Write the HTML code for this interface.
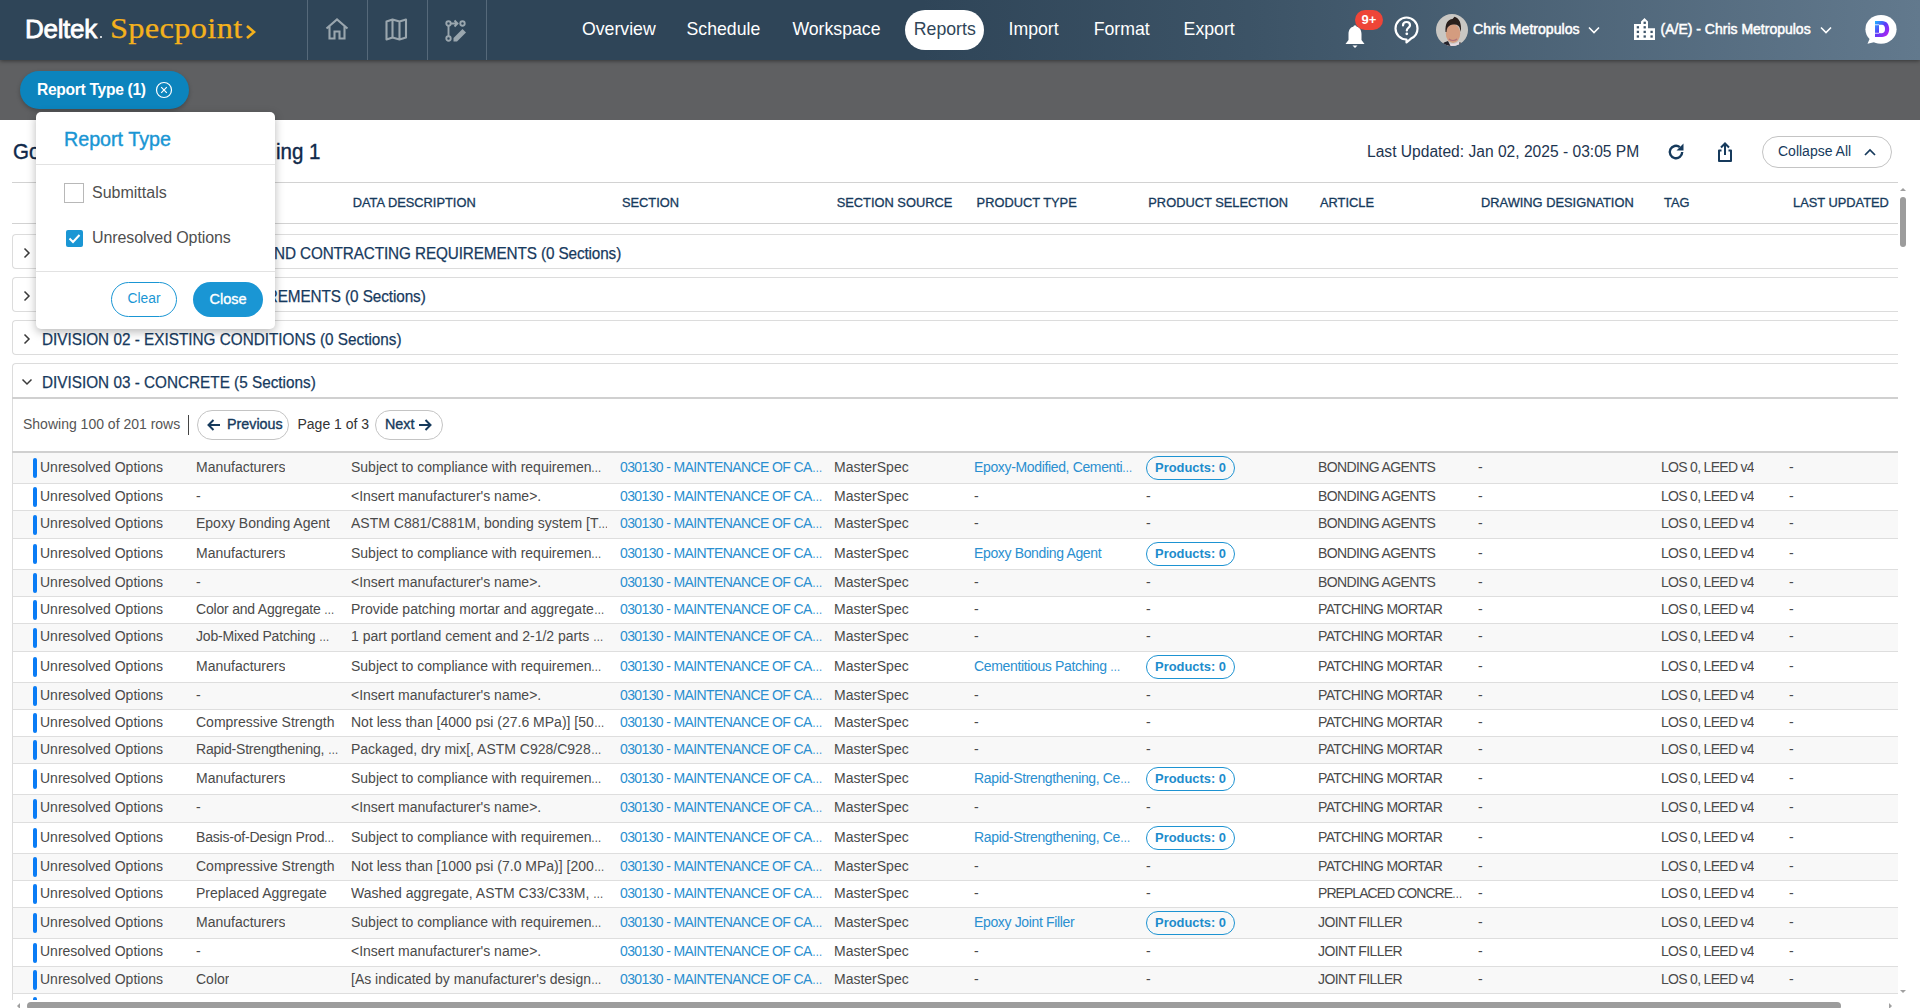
<!DOCTYPE html>
<html><head><meta charset="utf-8">
<style>
*{box-sizing:border-box;}
html,body{margin:0;padding:0;}
body{width:1920px;height:1008px;overflow:hidden;position:relative;font-family:"Liberation Sans",sans-serif;background:#fff;color:#444;}
.a{position:absolute;white-space:nowrap;}
#hdr{position:absolute;left:0;top:0;width:1920px;height:60px;background:linear-gradient(90deg,#2f4558 0%,#2f4558 48%,#3c5366 65%,#62798d 100%);z-index:6;box-shadow:0 1px 4px rgba(0,0,0,.45);}
.logo1{left:25px;top:13px;font-size:26px;color:#fff;letter-spacing:-0.3px;line-height:32px;-webkit-text-stroke:0.8px #fff;}
.logodot{left:100px;top:36px;width:2px;height:2px;background:#c9d0d6;}
.logo2{left:110px;top:11px;font-family:"Liberation Serif",serif;font-size:30px;color:#f4b11c;letter-spacing:0.3px;line-height:34px;-webkit-text-stroke:0.25px #f4b11c;transform:scaleX(1.08);transform-origin:0 0;}
.vdiv{top:0;width:1px;height:60px;background:#56697a;}
.nav{top:18px;font-size:17.7px;color:#fff;line-height:22px;}
.pillnav{left:905px;top:10px;width:79px;height:40px;border-radius:20px;background:#fff;}
#fbar{position:absolute;left:0;top:60px;width:1920px;height:60px;background:#5f6062;z-index:1;}
.chip{left:20px;top:71px;width:169px;height:38px;border-radius:19px;background:#0c84bd;z-index:7;box-shadow:0 2px 4px rgba(0,0,0,.25);}
.chiptxt{left:37px;top:80px;font-size:15.6px;font-weight:bold;color:#fff;line-height:20px;letter-spacing:-0.3px;z-index:8;}
.title{left:13px;top:139px;font-size:22.3px;color:#10294a;line-height:26px;-webkit-text-stroke:0.4px #10294a;transform:scaleX(0.92);transform-origin:0 0;}
.lu{left:1367px;top:142px;font-size:15.6px;color:#1d3550;line-height:20px;}
.btn{border:1px solid #c4c4c4;border-radius:16px;background:#fff;}
.hline{left:12px;width:1886px;height:1px;background:#d2d2d2;}
.th{top:195px;font-size:12.85px;color:#163a5c;line-height:16px;letter-spacing:0px;-webkit-text-stroke:0.3px #163a5c;}
.div{left:12px;width:1886px;height:35px;border:1px solid #dcdcdc;border-right:none;border-radius:4px 0 0 4px;background:#fff;}
.dtxt{font-size:16.6px;color:#173a5e;line-height:20px;-webkit-text-stroke:0.25px #173a5e;transform:scaleX(0.922);transform-origin:0 0;}
.tr{position:absolute;left:12px;width:1886px;border-bottom:1px solid #dedede;border-left:1px solid #dcdcdc;}
.td{position:absolute;top:0;white-space:nowrap;font-size:14px;color:#4a4a4a;}
.lk{color:#2a8fd0;}
.el{display:inline-block;transform:scaleX(0.75);transform-origin:0 50%;letter-spacing:0;}
.td{overflow:hidden;}
.up{letter-spacing:-0.62px;}
.pt{letter-spacing:-0.35px;}
.tr2{letter-spacing:-0.2px;}
.los{letter-spacing:-0.7px;}
.bar{position:absolute;left:20px;width:4px;height:20px;border-radius:2px;background:#0a7cf5;}
.pill{position:absolute;width:89px;height:24px;border:1.5px solid #1d93d2;border-radius:12px;color:#1d8ccc;font-weight:bold;font-size:12.9px;line-height:21px;text-align:center;}
#dd{position:absolute;left:36px;top:112px;width:239px;height:217px;background:#fff;border-radius:5px;box-shadow:0 3px 10px rgba(0,0,0,.28);z-index:10;}
</style></head><body>

<div id="hdr">
  <div class="a logo1">Deltek</div>
  <div class="a logodot"></div>
  <div class="a logo2">Specpoint</div>
  <svg class="a" style="left:245px;top:25px" width="11" height="14" viewBox="0 0 11 14"><path d="M2 1 L9 7 L2 13" fill="none" stroke="#f4b11c" stroke-width="2.6"/></svg>
  <div class="a vdiv" style="left:307px"></div>
  <div class="a vdiv" style="left:367px"></div>
  <div class="a vdiv" style="left:427px"></div>
  <div class="a vdiv" style="left:486px"></div>
  <!-- home -->
  <svg class="a" style="left:325px;top:18px" width="24" height="22" viewBox="0 0 24 22"><path d="M1.5 10.5 L12 1.5 L22.5 10.5 M4.5 8.5 V20.5 H9.5 V13.5 H14.5 V20.5 H19.5 V8.5" fill="none" stroke="#9aa6ae" stroke-width="2.1"/></svg>
  <!-- map -->
  <svg class="a" style="left:385px;top:18px" width="23" height="23" viewBox="0 0 23 23"><path d="M1.5 3.5 L7.5 1.5 L14.5 3.5 L21 1.5 V19.5 L14.5 21.5 L7.5 19.5 L1.5 21.5 Z M7.5 1.5 V19.5 M14.5 3.5 V21.5" fill="none" stroke="#9aa6ae" stroke-width="2.1" stroke-linejoin="round"/></svg>
  <!-- route edit -->
  <svg class="a" style="left:445px;top:19px" width="24" height="24" viewBox="0 0 24 24"><circle cx="3.5" cy="4.5" r="2.2" fill="none" stroke="#9aa6ae" stroke-width="1.9"/><circle cx="3.5" cy="19.5" r="2.2" fill="none" stroke="#9aa6ae" stroke-width="1.9"/><circle cx="17.5" cy="4.5" r="2.2" fill="none" stroke="#9aa6ae" stroke-width="1.9"/><path d="M3.5 6.7 V17.3 M5.7 4.5 H12.5 M9.5 1.5 L12.5 4.5 L9.5 7.5" fill="none" stroke="#9aa6ae" stroke-width="1.9"/><path d="M8.5 22.5 V19 L17.5 10 L21 13.5 L12 22.5 Z" fill="#9aa6ae"/></svg>

  <div class="a pillnav"></div>
  <div class="a nav" style="left:582px">Overview</div>
  <div class="a nav" style="left:686.5px">Schedule</div>
  <div class="a nav" style="left:792.4px">Workspace</div>
  <div class="a nav" style="left:913.8px;color:#2f4558">Reports</div>
  <div class="a nav" style="left:1008.5px">Import</div>
  <div class="a nav" style="left:1093.7px">Format</div>
  <div class="a nav" style="left:1183.6px">Export</div>

  <!-- bell -->
  <svg class="a" style="left:1344px;top:25px" width="22" height="24" viewBox="0 0 22 24"><path d="M11 1.5 C6.5 1.5 4.5 5 4.5 9 V15 L1.5 19 H20.5 L17.5 15 V9 C17.5 5 15.5 1.5 11 1.5 Z" fill="#fff"/><path d="M8.5 20.5 H13.5 L11 23 Z" fill="#fff"/><circle cx="11" cy="1.8" r="1.6" fill="#fff"/></svg>
  <div class="a" style="left:1355px;top:10px;width:28px;height:20px;border-radius:10px;background:#ee4538;color:#fff;font-weight:bold;font-size:13px;line-height:20px;text-align:center;">9+</div>
  <!-- help -->
  <svg class="a" style="left:1394px;top:16px" width="25" height="28" viewBox="0 0 25 28"><path d="M12.5 1.5 C6.4 1.5 1.5 6.4 1.5 12.5 C1.5 18.6 6.4 23.5 12.5 23.5 L12.5 26.5 L17 22.6 C20.8 20.9 23.5 17 23.5 12.5 C23.5 6.4 18.6 1.5 12.5 1.5 Z" fill="none" stroke="#fff" stroke-width="2.2" stroke-linejoin="round"/><path d="M9 9.5 C9 7.3 10.6 6 12.5 6 C14.4 6 16 7.3 16 9.2 C16 11.5 12.8 12 12.8 14.5" fill="none" stroke="#fff" stroke-width="2.2" stroke-linecap="round"/><circle cx="12.8" cy="17.8" r="1.4" fill="#fff"/></svg>
  <!-- avatar -->
  <svg class="a" style="left:1436px;top:14px" width="32" height="32" viewBox="0 0 32 32"><defs><clipPath id="ac"><circle cx="16" cy="16" r="16"/></clipPath></defs><g clip-path="url(#ac)"><rect width="32" height="32" fill="#c9c7c3"/><path d="M11 28 C14 30.5 20 30.5 23 27.5 L25 32 H11 Z" fill="#e6d8df"/><path d="M5 32 L8 28.5 L12 27 L14.5 32 Z" fill="#25222a"/><path d="M23.5 28 L26 29.5 L25 32 H23 Z" fill="#3a2f35"/><ellipse cx="17" cy="19.5" rx="7.2" ry="9.5" fill="#d49c7f"/><path d="M9.5 18 C9 9 12 5.5 16.5 5 L18.5 2.8 C23.5 4.5 25.5 9 25 18 L24 15 C23.5 11.5 21 10 17 10.5 C13.5 11 11 12.5 10.5 18 Z" fill="#2a1f1b"/><path d="M13 25 C15 27 19 27 21 25" stroke="#b0707a" stroke-width="1.2" fill="none"/></g></svg>
  <div class="a" style="left:1473px;top:20px;font-size:14.1px;-webkit-text-stroke:0.5px #fff;color:#fff;line-height:18px;">Chris Metropulos</div>
  <svg class="a" style="left:1588px;top:26px" width="12" height="8" viewBox="0 0 12 8"><path d="M1 1.5 L6 6.5 L11 1.5" fill="none" stroke="#fff" stroke-width="1.6"/></svg>
  <!-- building -->
  <svg class="a" style="left:1633px;top:18px" width="23" height="23" viewBox="0 0 23 23"><path d="M1 6 H8 V3.6 L11.5 0 L15 3.6 V10.2 H22 V22 H1 Z" fill="#fff"/><g fill="#3f566a"><rect x="10.55" y="3.65" width="2.3" height="2.3"/><rect x="3.75" y="8.15" width="2.3" height="2.3"/><rect x="10.55" y="8.15" width="2.3" height="2.3"/><rect x="3.75" y="12.75" width="2.3" height="2.3"/><rect x="10.55" y="12.75" width="2.3" height="2.3"/><rect x="17.45" y="12.75" width="2.3" height="2.3"/><rect x="3.75" y="17.35" width="2.3" height="2.3"/><rect x="10.55" y="17.35" width="2.3" height="2.3"/><rect x="17.45" y="17.35" width="2.3" height="2.3"/></g></svg>
  <div class="a" style="left:1660.5px;top:20px;font-size:14px;-webkit-text-stroke:0.5px #fff;color:#fff;line-height:18px;">(A/E) - Chris Metropulos</div>
  <svg class="a" style="left:1820px;top:26px" width="12" height="8" viewBox="0 0 12 8"><path d="M1 1.5 L6 6.5 L11 1.5" fill="none" stroke="#fff" stroke-width="1.6"/></svg>
  <!-- D bubble -->
  <svg class="a" style="left:1863px;top:13px" width="35" height="33" viewBox="0 0 35 33"><defs><linearGradient id="dg" x1="0" y1="0" x2="1" y2="1"><stop offset="0" stop-color="#1cb8ff"/><stop offset="0.45" stop-color="#5a3cf8"/><stop offset="1" stop-color="#c61cf0"/></linearGradient></defs><ellipse cx="18" cy="16.3" rx="15.6" ry="14.4" fill="#fff"/><path d="M7 25 L4.5 30.8 L12 29" fill="#fff"/><path fill-rule="evenodd" d="M12 8 H19 C23.8 8 26.2 11.6 26.2 16 C26.2 20.4 23.8 24 19 24 H12 Z M16 11.8 H19 C21 11.8 22 13.7 22 16 C22 18.3 21 20.2 19 20.2 H16 Z" fill="url(#dg)"/><rect x="12" y="11.4" width="4" height="0.8" fill="#fff"/><rect x="12" y="19.8" width="4" height="0.8" fill="#fff"/></svg>
</div>

<div id="fbar"></div>
<div class="a chip"></div>
<div class="a chiptxt">Report Type (1)</div>
<svg class="a" style="left:155px;top:81px;z-index:8" width="18" height="18" viewBox="0 0 18 18"><circle cx="9" cy="9" r="7.5" fill="none" stroke="#fff" stroke-width="1.2"/><path d="M6.2 6.2 L11.8 11.8 M11.8 6.2 L6.2 11.8" stroke="#fff" stroke-width="1.2"/></svg>

<!-- title bar -->
<div class="a title">Go</div><div class="a title" style="left:276px">ing 1</div>
<div class="a lu">Last Updated: Jan 02, 2025 - 03:05 PM</div>
<svg class="a" style="left:1666px;top:142px" width="20" height="20" viewBox="0 0 20 20"><path d="M16.2 10 A6.2 6.2 0 1 1 13.8 5.1" fill="none" stroke="#163a5c" stroke-width="2.4"/><path d="M17.5 1.5 V8.5 H10.5 Z" fill="#163a5c"/></svg>
<svg class="a" style="left:1715px;top:141px" width="20" height="22" viewBox="0 0 20 22"><path d="M10 14 V3 M6 6.5 L10 2.5 L14 6.5" fill="none" stroke="#163a5c" stroke-width="2"/><path d="M6.5 9.5 H4 V20 H16 V9.5 H13.5" fill="none" stroke="#163a5c" stroke-width="2" stroke-linejoin="round"/></svg>
<div class="a btn" style="left:1762px;top:136px;width:130px;height:32px;"></div>
<div class="a" style="left:1778px;top:142px;font-size:14px;color:#163a5c;line-height:18px;">Collapse All</div>
<svg class="a" style="left:1863px;top:147px" width="14" height="10" viewBox="0 0 14 10"><path d="M2 8 L7 3 L12 8" fill="none" stroke="#163a5c" stroke-width="1.7"/></svg>

<div class="a hline" style="top:182px"></div>
<div class="a th" style="left:40px">REPORT TYPE</div>
<div class="a th" style="left:197px">TITLE</div>
<div class="a th" style="left:352.7px">DATA DESCRIPTION</div>
<div class="a th" style="left:621.9px">SECTION</div>
<div class="a th" style="left:836.7px">SECTION SOURCE</div>
<div class="a th" style="left:976.6px">PRODUCT TYPE</div>
<div class="a th" style="left:1148.3px">PRODUCT SELECTION</div>
<div class="a th" style="left:1320px">ARTICLE</div>
<div class="a th" style="left:1481px">DRAWING DESIGNATION</div>
<div class="a th" style="left:1664px">TAG</div>
<div class="a th" style="left:1793px">LAST UPDATED</div>
<div class="a hline" style="top:223px"></div>

<!-- divisions -->
<div class="a div" style="top:234px"></div>
<svg class="a" style="left:22px;top:247px" width="10" height="12" viewBox="0 0 10 12"><path d="M2.5 1.5 L7 6 L2.5 10.5" fill="none" stroke="#3a3a3a" stroke-width="1.5"/></svg>
<div class="a dtxt" style="left:42px;top:244px;letter-spacing:-0.13px">DIVISION 00 - PROCUREMENT AND CONTRACTING REQUIREMENTS (0 Sections)</div>
<div class="a div" style="top:277px"></div>
<svg class="a" style="left:22px;top:290px" width="10" height="12" viewBox="0 0 10 12"><path d="M2.5 1.5 L7 6 L2.5 10.5" fill="none" stroke="#3a3a3a" stroke-width="1.5"/></svg>
<div class="a dtxt" style="left:42px;top:287px;letter-spacing:-0.1px">DIVISION 01 - GENERAL REQUIREMENTS (0 Sections)</div>
<div class="a div" style="top:320px"></div>
<svg class="a" style="left:22px;top:333px" width="10" height="12" viewBox="0 0 10 12"><path d="M2.5 1.5 L7 6 L2.5 10.5" fill="none" stroke="#3a3a3a" stroke-width="1.5"/></svg>
<div class="a dtxt" style="left:42px;top:330px">DIVISION 02 - EXISTING CONDITIONS (0 Sections)</div>
<div class="a div" style="top:363px;height:700px;"></div>
<svg class="a" style="left:21px;top:377px" width="12" height="10" viewBox="0 0 12 10"><path d="M1.5 2.5 L6 7 L10.5 2.5" fill="none" stroke="#3a3a3a" stroke-width="1.5"/></svg>
<div class="a dtxt" style="left:42px;top:373px">DIVISION 03 - CONCRETE (5 Sections)</div>
<div class="a" style="left:12px;top:397px;width:1886px;height:2px;background:#d0d0d0;"></div>

<!-- pagination -->
<div class="a" style="left:23px;top:415px;font-size:14px;color:#555;line-height:18px;">Showing 100 of 201 rows</div>
<div class="a" style="left:188px;top:415px;width:1px;height:20px;background:#444;"></div>
<div class="a btn" style="left:197px;top:410px;width:92px;height:30px;border-radius:15px;"></div>
<svg class="a" style="left:206px;top:417px" width="16" height="16" viewBox="0 0 16 16"><path d="M14 8 H2.5 M7.5 3 L2.5 8 L7.5 13" fill="none" stroke="#163a5c" stroke-width="2"/></svg>
<div class="a" style="left:227px;top:415px;font-size:14.3px;-webkit-text-stroke:0.35px #163a5c;color:#163a5c;line-height:18px;">Previous</div>
<div class="a" style="left:297.5px;top:415px;font-size:14px;color:#333;line-height:18px;">Page 1 of 3</div>
<div class="a btn" style="left:375px;top:410px;width:68px;height:30px;border-radius:15px;"></div>
<div class="a" style="left:385px;top:415px;font-size:14.3px;-webkit-text-stroke:0.35px #163a5c;color:#163a5c;line-height:18px;">Next</div>
<svg class="a" style="left:417px;top:417px" width="16" height="16" viewBox="0 0 16 16"><path d="M2 8 H13.5 M8.5 3 L13.5 8 L8.5 13" fill="none" stroke="#163a5c" stroke-width="2"/></svg>
<div class="a" style="left:12px;top:451px;width:1886px;height:2px;background:#d0d0d0;"></div>

<div class="tr" style="top:453px;height:31px;background:#f8f8f8">
<div class="bar" style="top:5.0px"></div>
<div class="td" style="left:27px;height:30px;line-height:28px">Unresolved Options</div>
<div class="td" style="left:183px;height:30px;line-height:28px">Manufacturers</div>
<div class="td" style="left:338px;width:256px;height:30px;line-height:28px">Subject to compliance with requiremen<span class="el">…</span></div>
<div class="td lk up" style="left:607px;width:204px;height:30px;line-height:28px">030130 - MAINTENANCE OF CA<span class="el">…</span></div>
<div class="td" style="left:821px;height:30px;line-height:28px">MasterSpec</div>
<div class="td lk pt" style="left:961px;width:164px;height:30px;line-height:28px">Epoxy-Modified, Cementi<span class="el">…</span></div>
<div class="pill" style="left:1133px;top:3.0px">Products: 0</div>
<div class="td up" style="left:1305px;width:158px;height:30px;line-height:28px">BONDING AGENTS</div>
<div class="td" style="left:1465px;height:30px;line-height:28px">-</div>
<div class="td los" style="left:1648px;height:30px;line-height:28px">LOS 0, LEED v4</div>
<div class="td" style="left:1776px;height:30px;line-height:28px">-</div>
</div>
<div class="tr" style="top:484px;height:27px;background:#fff">
<div class="bar" style="top:3.0px"></div>
<div class="td" style="left:27px;height:26px;line-height:24px">Unresolved Options</div>
<div class="td" style="left:183px;height:26px;line-height:24px">-</div>
<div class="td" style="left:338px;width:256px;height:26px;line-height:24px">&lt;Insert manufacturer's name&gt;.</div>
<div class="td lk up" style="left:607px;width:204px;height:26px;line-height:24px">030130 - MAINTENANCE OF CA<span class="el">…</span></div>
<div class="td" style="left:821px;height:26px;line-height:24px">MasterSpec</div>
<div class="td" style="left:961px;height:26px;line-height:24px">-</div>
<div class="td" style="left:1133px;height:26px;line-height:24px">-</div>
<div class="td up" style="left:1305px;width:158px;height:26px;line-height:24px">BONDING AGENTS</div>
<div class="td" style="left:1465px;height:26px;line-height:24px">-</div>
<div class="td los" style="left:1648px;height:26px;line-height:24px">LOS 0, LEED v4</div>
<div class="td" style="left:1776px;height:26px;line-height:24px">-</div>
</div>
<div class="tr" style="top:511px;height:28px;background:#f8f8f8">
<div class="bar" style="top:3.5px"></div>
<div class="td" style="left:27px;height:27px;line-height:25px">Unresolved Options</div>
<div class="td" style="left:183px;height:27px;line-height:25px">Epoxy Bonding Agent</div>
<div class="td" style="left:338px;width:256px;height:27px;line-height:25px">ASTM C881/C881M, bonding system [T<span class="el">…</span></div>
<div class="td lk up" style="left:607px;width:204px;height:27px;line-height:25px">030130 - MAINTENANCE OF CA<span class="el">…</span></div>
<div class="td" style="left:821px;height:27px;line-height:25px">MasterSpec</div>
<div class="td" style="left:961px;height:27px;line-height:25px">-</div>
<div class="td" style="left:1133px;height:27px;line-height:25px">-</div>
<div class="td up" style="left:1305px;width:158px;height:27px;line-height:25px">BONDING AGENTS</div>
<div class="td" style="left:1465px;height:27px;line-height:25px">-</div>
<div class="td los" style="left:1648px;height:27px;line-height:25px">LOS 0, LEED v4</div>
<div class="td" style="left:1776px;height:27px;line-height:25px">-</div>
</div>
<div class="tr" style="top:539px;height:31px;background:#fff">
<div class="bar" style="top:5.0px"></div>
<div class="td" style="left:27px;height:30px;line-height:28px">Unresolved Options</div>
<div class="td" style="left:183px;height:30px;line-height:28px">Manufacturers</div>
<div class="td" style="left:338px;width:256px;height:30px;line-height:28px">Subject to compliance with requiremen<span class="el">…</span></div>
<div class="td lk up" style="left:607px;width:204px;height:30px;line-height:28px">030130 - MAINTENANCE OF CA<span class="el">…</span></div>
<div class="td" style="left:821px;height:30px;line-height:28px">MasterSpec</div>
<div class="td lk pt" style="left:961px;width:164px;height:30px;line-height:28px">Epoxy Bonding Agent</div>
<div class="pill" style="left:1133px;top:3.0px">Products: 0</div>
<div class="td up" style="left:1305px;width:158px;height:30px;line-height:28px">BONDING AGENTS</div>
<div class="td" style="left:1465px;height:30px;line-height:28px">-</div>
<div class="td los" style="left:1648px;height:30px;line-height:28px">LOS 0, LEED v4</div>
<div class="td" style="left:1776px;height:30px;line-height:28px">-</div>
</div>
<div class="tr" style="top:570px;height:27px;background:#f8f8f8">
<div class="bar" style="top:3.0px"></div>
<div class="td" style="left:27px;height:26px;line-height:24px">Unresolved Options</div>
<div class="td" style="left:183px;height:26px;line-height:24px">-</div>
<div class="td" style="left:338px;width:256px;height:26px;line-height:24px">&lt;Insert manufacturer's name&gt;.</div>
<div class="td lk up" style="left:607px;width:204px;height:26px;line-height:24px">030130 - MAINTENANCE OF CA<span class="el">…</span></div>
<div class="td" style="left:821px;height:26px;line-height:24px">MasterSpec</div>
<div class="td" style="left:961px;height:26px;line-height:24px">-</div>
<div class="td" style="left:1133px;height:26px;line-height:24px">-</div>
<div class="td up" style="left:1305px;width:158px;height:26px;line-height:24px">BONDING AGENTS</div>
<div class="td" style="left:1465px;height:26px;line-height:24px">-</div>
<div class="td los" style="left:1648px;height:26px;line-height:24px">LOS 0, LEED v4</div>
<div class="td" style="left:1776px;height:26px;line-height:24px">-</div>
</div>
<div class="tr" style="top:597px;height:27px;background:#fff">
<div class="bar" style="top:3.0px"></div>
<div class="td" style="left:27px;height:26px;line-height:24px">Unresolved Options</div>
<div class="td tr2" style="left:183px;height:26px;line-height:24px">Color and Aggregate <span class="el">…</span></div>
<div class="td" style="left:338px;width:256px;height:26px;line-height:24px">Provide patching mortar and aggregate<span class="el">…</span></div>
<div class="td lk up" style="left:607px;width:204px;height:26px;line-height:24px">030130 - MAINTENANCE OF CA<span class="el">…</span></div>
<div class="td" style="left:821px;height:26px;line-height:24px">MasterSpec</div>
<div class="td" style="left:961px;height:26px;line-height:24px">-</div>
<div class="td" style="left:1133px;height:26px;line-height:24px">-</div>
<div class="td up" style="left:1305px;width:158px;height:26px;line-height:24px">PATCHING MORTAR</div>
<div class="td" style="left:1465px;height:26px;line-height:24px">-</div>
<div class="td los" style="left:1648px;height:26px;line-height:24px">LOS 0, LEED v4</div>
<div class="td" style="left:1776px;height:26px;line-height:24px">-</div>
</div>
<div class="tr" style="top:624px;height:28px;background:#f8f8f8">
<div class="bar" style="top:3.5px"></div>
<div class="td" style="left:27px;height:27px;line-height:25px">Unresolved Options</div>
<div class="td tr2" style="left:183px;height:27px;line-height:25px">Job-Mixed Patching <span class="el">…</span></div>
<div class="td" style="left:338px;width:256px;height:27px;line-height:25px">1 part portland cement and 2-1/2 parts <span class="el">…</span></div>
<div class="td lk up" style="left:607px;width:204px;height:27px;line-height:25px">030130 - MAINTENANCE OF CA<span class="el">…</span></div>
<div class="td" style="left:821px;height:27px;line-height:25px">MasterSpec</div>
<div class="td" style="left:961px;height:27px;line-height:25px">-</div>
<div class="td" style="left:1133px;height:27px;line-height:25px">-</div>
<div class="td up" style="left:1305px;width:158px;height:27px;line-height:25px">PATCHING MORTAR</div>
<div class="td" style="left:1465px;height:27px;line-height:25px">-</div>
<div class="td los" style="left:1648px;height:27px;line-height:25px">LOS 0, LEED v4</div>
<div class="td" style="left:1776px;height:27px;line-height:25px">-</div>
</div>
<div class="tr" style="top:652px;height:31px;background:#fff">
<div class="bar" style="top:5.0px"></div>
<div class="td" style="left:27px;height:30px;line-height:28px">Unresolved Options</div>
<div class="td" style="left:183px;height:30px;line-height:28px">Manufacturers</div>
<div class="td" style="left:338px;width:256px;height:30px;line-height:28px">Subject to compliance with requiremen<span class="el">…</span></div>
<div class="td lk up" style="left:607px;width:204px;height:30px;line-height:28px">030130 - MAINTENANCE OF CA<span class="el">…</span></div>
<div class="td" style="left:821px;height:30px;line-height:28px">MasterSpec</div>
<div class="td lk pt" style="left:961px;width:164px;height:30px;line-height:28px">Cementitious Patching <span class="el">…</span></div>
<div class="pill" style="left:1133px;top:3.0px">Products: 0</div>
<div class="td up" style="left:1305px;width:158px;height:30px;line-height:28px">PATCHING MORTAR</div>
<div class="td" style="left:1465px;height:30px;line-height:28px">-</div>
<div class="td los" style="left:1648px;height:30px;line-height:28px">LOS 0, LEED v4</div>
<div class="td" style="left:1776px;height:30px;line-height:28px">-</div>
</div>
<div class="tr" style="top:683px;height:27px;background:#f8f8f8">
<div class="bar" style="top:3.0px"></div>
<div class="td" style="left:27px;height:26px;line-height:24px">Unresolved Options</div>
<div class="td" style="left:183px;height:26px;line-height:24px">-</div>
<div class="td" style="left:338px;width:256px;height:26px;line-height:24px">&lt;Insert manufacturer's name&gt;.</div>
<div class="td lk up" style="left:607px;width:204px;height:26px;line-height:24px">030130 - MAINTENANCE OF CA<span class="el">…</span></div>
<div class="td" style="left:821px;height:26px;line-height:24px">MasterSpec</div>
<div class="td" style="left:961px;height:26px;line-height:24px">-</div>
<div class="td" style="left:1133px;height:26px;line-height:24px">-</div>
<div class="td up" style="left:1305px;width:158px;height:26px;line-height:24px">PATCHING MORTAR</div>
<div class="td" style="left:1465px;height:26px;line-height:24px">-</div>
<div class="td los" style="left:1648px;height:26px;line-height:24px">LOS 0, LEED v4</div>
<div class="td" style="left:1776px;height:26px;line-height:24px">-</div>
</div>
<div class="tr" style="top:710px;height:27px;background:#fff">
<div class="bar" style="top:3.0px"></div>
<div class="td" style="left:27px;height:26px;line-height:24px">Unresolved Options</div>
<div class="td" style="left:183px;height:26px;line-height:24px">Compressive Strength</div>
<div class="td" style="left:338px;width:256px;height:26px;line-height:24px">Not less than [4000 psi (27.6 MPa)] [50<span class="el">…</span></div>
<div class="td lk up" style="left:607px;width:204px;height:26px;line-height:24px">030130 - MAINTENANCE OF CA<span class="el">…</span></div>
<div class="td" style="left:821px;height:26px;line-height:24px">MasterSpec</div>
<div class="td" style="left:961px;height:26px;line-height:24px">-</div>
<div class="td" style="left:1133px;height:26px;line-height:24px">-</div>
<div class="td up" style="left:1305px;width:158px;height:26px;line-height:24px">PATCHING MORTAR</div>
<div class="td" style="left:1465px;height:26px;line-height:24px">-</div>
<div class="td los" style="left:1648px;height:26px;line-height:24px">LOS 0, LEED v4</div>
<div class="td" style="left:1776px;height:26px;line-height:24px">-</div>
</div>
<div class="tr" style="top:737px;height:27px;background:#f8f8f8">
<div class="bar" style="top:3.0px"></div>
<div class="td" style="left:27px;height:26px;line-height:24px">Unresolved Options</div>
<div class="td tr2" style="left:183px;height:26px;line-height:24px">Rapid-Strengthening, <span class="el">…</span></div>
<div class="td" style="left:338px;width:256px;height:26px;line-height:24px">Packaged, dry mix[, ASTM C928/C928<span class="el">…</span></div>
<div class="td lk up" style="left:607px;width:204px;height:26px;line-height:24px">030130 - MAINTENANCE OF CA<span class="el">…</span></div>
<div class="td" style="left:821px;height:26px;line-height:24px">MasterSpec</div>
<div class="td" style="left:961px;height:26px;line-height:24px">-</div>
<div class="td" style="left:1133px;height:26px;line-height:24px">-</div>
<div class="td up" style="left:1305px;width:158px;height:26px;line-height:24px">PATCHING MORTAR</div>
<div class="td" style="left:1465px;height:26px;line-height:24px">-</div>
<div class="td los" style="left:1648px;height:26px;line-height:24px">LOS 0, LEED v4</div>
<div class="td" style="left:1776px;height:26px;line-height:24px">-</div>
</div>
<div class="tr" style="top:764px;height:31px;background:#fff">
<div class="bar" style="top:5.0px"></div>
<div class="td" style="left:27px;height:30px;line-height:28px">Unresolved Options</div>
<div class="td" style="left:183px;height:30px;line-height:28px">Manufacturers</div>
<div class="td" style="left:338px;width:256px;height:30px;line-height:28px">Subject to compliance with requiremen<span class="el">…</span></div>
<div class="td lk up" style="left:607px;width:204px;height:30px;line-height:28px">030130 - MAINTENANCE OF CA<span class="el">…</span></div>
<div class="td" style="left:821px;height:30px;line-height:28px">MasterSpec</div>
<div class="td lk pt" style="left:961px;width:164px;height:30px;line-height:28px">Rapid-Strengthening, Ce<span class="el">…</span></div>
<div class="pill" style="left:1133px;top:3.0px">Products: 0</div>
<div class="td up" style="left:1305px;width:158px;height:30px;line-height:28px">PATCHING MORTAR</div>
<div class="td" style="left:1465px;height:30px;line-height:28px">-</div>
<div class="td los" style="left:1648px;height:30px;line-height:28px">LOS 0, LEED v4</div>
<div class="td" style="left:1776px;height:30px;line-height:28px">-</div>
</div>
<div class="tr" style="top:795px;height:28px;background:#f8f8f8">
<div class="bar" style="top:3.5px"></div>
<div class="td" style="left:27px;height:27px;line-height:25px">Unresolved Options</div>
<div class="td" style="left:183px;height:27px;line-height:25px">-</div>
<div class="td" style="left:338px;width:256px;height:27px;line-height:25px">&lt;Insert manufacturer's name&gt;.</div>
<div class="td lk up" style="left:607px;width:204px;height:27px;line-height:25px">030130 - MAINTENANCE OF CA<span class="el">…</span></div>
<div class="td" style="left:821px;height:27px;line-height:25px">MasterSpec</div>
<div class="td" style="left:961px;height:27px;line-height:25px">-</div>
<div class="td" style="left:1133px;height:27px;line-height:25px">-</div>
<div class="td up" style="left:1305px;width:158px;height:27px;line-height:25px">PATCHING MORTAR</div>
<div class="td" style="left:1465px;height:27px;line-height:25px">-</div>
<div class="td los" style="left:1648px;height:27px;line-height:25px">LOS 0, LEED v4</div>
<div class="td" style="left:1776px;height:27px;line-height:25px">-</div>
</div>
<div class="tr" style="top:823px;height:31px;background:#fff">
<div class="bar" style="top:5.0px"></div>
<div class="td" style="left:27px;height:30px;line-height:28px">Unresolved Options</div>
<div class="td tr2" style="left:183px;height:30px;line-height:28px">Basis-of-Design Prod<span class="el">…</span></div>
<div class="td" style="left:338px;width:256px;height:30px;line-height:28px">Subject to compliance with requiremen<span class="el">…</span></div>
<div class="td lk up" style="left:607px;width:204px;height:30px;line-height:28px">030130 - MAINTENANCE OF CA<span class="el">…</span></div>
<div class="td" style="left:821px;height:30px;line-height:28px">MasterSpec</div>
<div class="td lk pt" style="left:961px;width:164px;height:30px;line-height:28px">Rapid-Strengthening, Ce<span class="el">…</span></div>
<div class="pill" style="left:1133px;top:3.0px">Products: 0</div>
<div class="td up" style="left:1305px;width:158px;height:30px;line-height:28px">PATCHING MORTAR</div>
<div class="td" style="left:1465px;height:30px;line-height:28px">-</div>
<div class="td los" style="left:1648px;height:30px;line-height:28px">LOS 0, LEED v4</div>
<div class="td" style="left:1776px;height:30px;line-height:28px">-</div>
</div>
<div class="tr" style="top:854px;height:27px;background:#f8f8f8">
<div class="bar" style="top:3.0px"></div>
<div class="td" style="left:27px;height:26px;line-height:24px">Unresolved Options</div>
<div class="td" style="left:183px;height:26px;line-height:24px">Compressive Strength</div>
<div class="td" style="left:338px;width:256px;height:26px;line-height:24px">Not less than [1000 psi (7.0 MPa)] [200<span class="el">…</span></div>
<div class="td lk up" style="left:607px;width:204px;height:26px;line-height:24px">030130 - MAINTENANCE OF CA<span class="el">…</span></div>
<div class="td" style="left:821px;height:26px;line-height:24px">MasterSpec</div>
<div class="td" style="left:961px;height:26px;line-height:24px">-</div>
<div class="td" style="left:1133px;height:26px;line-height:24px">-</div>
<div class="td up" style="left:1305px;width:158px;height:26px;line-height:24px">PATCHING MORTAR</div>
<div class="td" style="left:1465px;height:26px;line-height:24px">-</div>
<div class="td los" style="left:1648px;height:26px;line-height:24px">LOS 0, LEED v4</div>
<div class="td" style="left:1776px;height:26px;line-height:24px">-</div>
</div>
<div class="tr" style="top:881px;height:27px;background:#fff">
<div class="bar" style="top:3.0px"></div>
<div class="td" style="left:27px;height:26px;line-height:24px">Unresolved Options</div>
<div class="td" style="left:183px;height:26px;line-height:24px">Preplaced Aggregate</div>
<div class="td" style="left:338px;width:256px;height:26px;line-height:24px">Washed aggregate, ASTM C33/C33M, <span class="el">…</span></div>
<div class="td lk up" style="left:607px;width:204px;height:26px;line-height:24px">030130 - MAINTENANCE OF CA<span class="el">…</span></div>
<div class="td" style="left:821px;height:26px;line-height:24px">MasterSpec</div>
<div class="td" style="left:961px;height:26px;line-height:24px">-</div>
<div class="td" style="left:1133px;height:26px;line-height:24px">-</div>
<div class="td up" style="letter-spacing:-0.95px;left:1305px;width:158px;height:26px;line-height:24px">PREPLACED CONCRE<span class="el">…</span></div>
<div class="td" style="left:1465px;height:26px;line-height:24px">-</div>
<div class="td los" style="left:1648px;height:26px;line-height:24px">LOS 0, LEED v4</div>
<div class="td" style="left:1776px;height:26px;line-height:24px">-</div>
</div>
<div class="tr" style="top:908px;height:31px;background:#f8f8f8">
<div class="bar" style="top:5.0px"></div>
<div class="td" style="left:27px;height:30px;line-height:28px">Unresolved Options</div>
<div class="td" style="left:183px;height:30px;line-height:28px">Manufacturers</div>
<div class="td" style="left:338px;width:256px;height:30px;line-height:28px">Subject to compliance with requiremen<span class="el">…</span></div>
<div class="td lk up" style="left:607px;width:204px;height:30px;line-height:28px">030130 - MAINTENANCE OF CA<span class="el">…</span></div>
<div class="td" style="left:821px;height:30px;line-height:28px">MasterSpec</div>
<div class="td lk pt" style="left:961px;width:164px;height:30px;line-height:28px">Epoxy Joint Filler</div>
<div class="pill" style="left:1133px;top:3.0px">Products: 0</div>
<div class="td up" style="left:1305px;width:158px;height:30px;line-height:28px">JOINT FILLER</div>
<div class="td" style="left:1465px;height:30px;line-height:28px">-</div>
<div class="td los" style="left:1648px;height:30px;line-height:28px">LOS 0, LEED v4</div>
<div class="td" style="left:1776px;height:30px;line-height:28px">-</div>
</div>
<div class="tr" style="top:939px;height:28px;background:#fff">
<div class="bar" style="top:3.5px"></div>
<div class="td" style="left:27px;height:27px;line-height:25px">Unresolved Options</div>
<div class="td" style="left:183px;height:27px;line-height:25px">-</div>
<div class="td" style="left:338px;width:256px;height:27px;line-height:25px">&lt;Insert manufacturer's name&gt;.</div>
<div class="td lk up" style="left:607px;width:204px;height:27px;line-height:25px">030130 - MAINTENANCE OF CA<span class="el">…</span></div>
<div class="td" style="left:821px;height:27px;line-height:25px">MasterSpec</div>
<div class="td" style="left:961px;height:27px;line-height:25px">-</div>
<div class="td" style="left:1133px;height:27px;line-height:25px">-</div>
<div class="td up" style="left:1305px;width:158px;height:27px;line-height:25px">JOINT FILLER</div>
<div class="td" style="left:1465px;height:27px;line-height:25px">-</div>
<div class="td los" style="left:1648px;height:27px;line-height:25px">LOS 0, LEED v4</div>
<div class="td" style="left:1776px;height:27px;line-height:25px">-</div>
</div>
<div class="tr" style="top:967px;height:27px;background:#f8f8f8">
<div class="bar" style="top:3.0px"></div>
<div class="td" style="left:27px;height:26px;line-height:24px">Unresolved Options</div>
<div class="td" style="left:183px;height:26px;line-height:24px">Color</div>
<div class="td" style="left:338px;width:256px;height:26px;line-height:24px">[As indicated by manufacturer's design<span class="el">…</span></div>
<div class="td lk up" style="left:607px;width:204px;height:26px;line-height:24px">030130 - MAINTENANCE OF CA<span class="el">…</span></div>
<div class="td" style="left:821px;height:26px;line-height:24px">MasterSpec</div>
<div class="td" style="left:961px;height:26px;line-height:24px">-</div>
<div class="td" style="left:1133px;height:26px;line-height:24px">-</div>
<div class="td up" style="left:1305px;width:158px;height:26px;line-height:24px">JOINT FILLER</div>
<div class="td" style="left:1465px;height:26px;line-height:24px">-</div>
<div class="td los" style="left:1648px;height:26px;line-height:24px">LOS 0, LEED v4</div>
<div class="td" style="left:1776px;height:26px;line-height:24px">-</div>
</div>
<div class="tr" style="top:994px;height:27px;background:#fff">
<div class="bar" style="top:3.0px"></div>
<div class="td" style="left:27px;height:26px;line-height:24px">Unresolved Options</div>
<div class="td" style="left:183px;height:26px;line-height:24px">-</div>
<div class="td" style="left:338px;width:256px;height:26px;line-height:24px">-</div>
<div class="td lk up" style="left:607px;width:204px;height:26px;line-height:24px">030130 - MAINTENANCE OF CA<span class="el">…</span></div>
<div class="td" style="left:821px;height:26px;line-height:24px">MasterSpec</div>
<div class="td" style="left:961px;height:26px;line-height:24px">-</div>
<div class="td" style="left:1133px;height:26px;line-height:24px">-</div>
<div class="td up" style="left:1305px;width:158px;height:26px;line-height:24px">JOINT FILLER</div>
<div class="td" style="left:1465px;height:26px;line-height:24px">-</div>
<div class="td los" style="left:1648px;height:26px;line-height:24px">LOS 0, LEED v4</div>
<div class="td" style="left:1776px;height:26px;line-height:24px">-</div>
</div>

<!-- scrollbars -->
<div class="a" style="left:1898px;top:182px;width:22px;height:826px;background:#fff;"></div>
<svg class="a" style="left:1898px;top:185px" width="10" height="8" viewBox="0 0 10 8"><path d="M2 6 L5 3 L8 6 Z" fill="#a0a0a0"/></svg>
<div class="a" style="left:1900px;top:197px;width:6px;height:50px;border-radius:3px;background:#9c9c9c;"></div>
<svg class="a" style="left:1898px;top:988px" width="10" height="8" viewBox="0 0 10 8"><path d="M2 2 L5 5 L8 2 Z" fill="#a0a0a0"/></svg>
<div class="a" style="left:0px;top:1000px;width:1920px;height:8px;background:#fff;"></div>
<svg class="a" style="left:14px;top:1001px" width="8" height="10" viewBox="0 0 8 10"><path d="M6 2 L3 5 L6 8 Z" fill="#a0a0a0"/></svg>
<div class="a" style="left:27px;top:1002px;width:1814px;height:8px;border-radius:4px;background:#9c9c9c;"></div>
<svg class="a" style="left:1887px;top:1001px" width="8" height="10" viewBox="0 0 8 10"><path d="M2 2 L5 5 L2 8 Z" fill="#a0a0a0"/></svg>

<!-- dropdown -->
<div id="dd">
  <div class="a" style="left:28px;top:15px;font-size:19.7px;color:#1a96d4;line-height:24px;-webkit-text-stroke:0.4px #1a96d4;">Report Type</div>
  <div class="a" style="left:0;top:52px;width:239px;height:1px;background:#e2e2e2;"></div>
  <div class="a" style="left:28px;top:71px;width:20px;height:20px;border:1px solid #b8b8b8;background:#fff;"></div>
  <div class="a" style="left:56px;top:72px;font-size:16px;color:#4f4f4f;line-height:18px;">Submittals</div>
  <div class="a" style="left:30px;top:118px;width:17px;height:17px;border-radius:2px;background:#1a96d4;"></div>
  <svg class="a" style="left:30px;top:118px" width="17" height="17" viewBox="0 0 17 17"><path d="M3.5 8.5 L7 12 L13.5 5" fill="none" stroke="#fff" stroke-width="2"/></svg>
  <div class="a" style="left:56px;top:117px;font-size:16px;color:#4f4f4f;line-height:18px;letter-spacing:-0.1px;">Unresolved Options</div>
  <div class="a" style="left:0;top:159px;width:239px;height:1px;background:#e2e2e2;"></div>
  <div class="a" style="left:75px;top:170px;width:66px;height:35px;border:1.3px solid #1a96d4;border-radius:18px;color:#1a96d4;font-size:13.8px;line-height:32px;text-align:center;">Clear</div>
  <div class="a" style="left:157px;top:170px;width:70px;height:35px;border-radius:18px;background:#1a96d4;color:#fff;font-size:14.5px;-webkit-text-stroke:0.35px #fff;line-height:35px;text-align:center;">Close</div>
</div>

</body></html>
